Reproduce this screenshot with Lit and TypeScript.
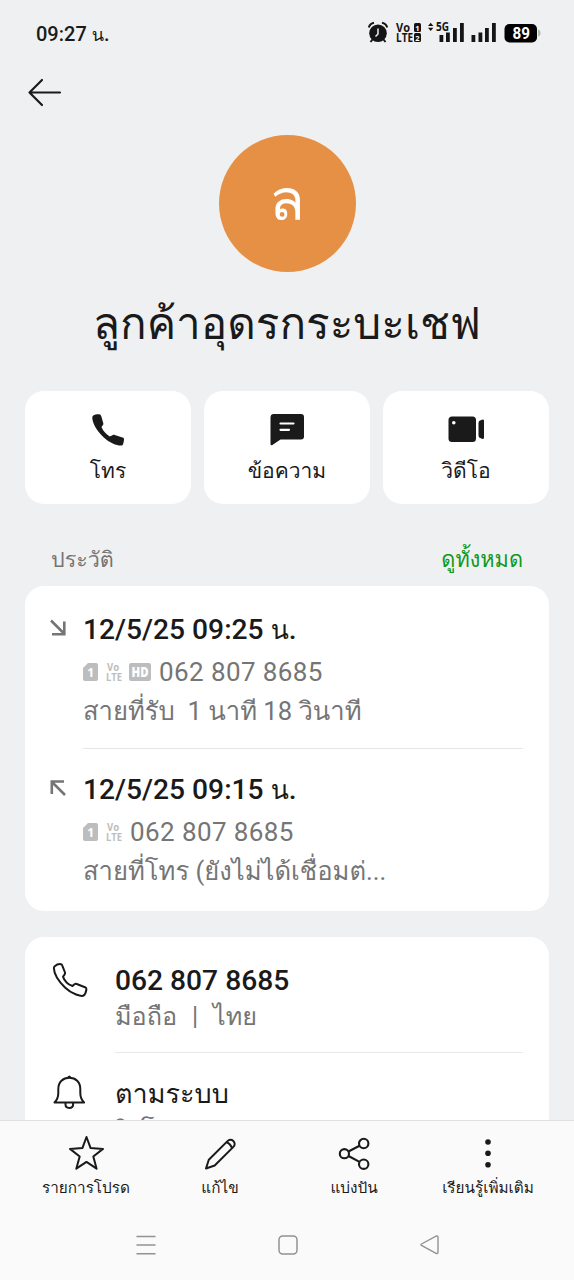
import { LitElement, html, svg, css } from "lit";
import { customElement, property } from "lit/decorators.js";

const icons: Record<string, unknown> = {
  back: svg`<path d="M60 92.5H29.5M42 80L29.5 92.5L42 105" transform="translate(-28 -77)" fill="none" stroke="#1a1a1a" stroke-width="2.2" stroke-linecap="round" stroke-linejoin="round"/>`,
  call: svg`<path d="M1.2 1.6C2.6.6 6 .1 7.8.4C8.800.6 9 1.300 9.300 2.300L11.300 9.200C11.500 10.200 11.300 10.700 10.600 11.500L9.500 13C11 17 14.600 20.500 17.800 22.500L20.400 21.200C21.200 20.700 21.800 20.600 22.700 20.900L30.500 23.400C31.700 23.800 32.100 24.400 32 25.500C31.700 28.500 31.400 30.800 30 31.400C27.400 32.500 18 29.500 11.800 23.500C5 17 .6 9.500.3 4.200C.3 2.700.6 2.100 1.200 1.600Z" fill="#1a1a1a"/>`,
  message: svg`<path d="M3 0H31A3 3 0 0 1 34 3V22.500A3 3 0 0 1 31 25.500H10.500L2 31.200Q.5 31.500.5 30V3A3 3 0 0 1 3 0Z" fill="#1a1a1a"/><path d="M10.500 9.500H23.500M10.500 15.800H19" stroke="#fff" stroke-width="2.200" stroke-linecap="round"/>`,
  video: svg`<rect x=".5" y=".5" width="27.500" height="25.500" rx="3.500" fill="#1a1a1a"/><circle cx="5.800" cy="6.700" r="1.800" fill="#fff"/><path d="M30.500 7.500Q30.500 5.500 31.500 4.700L34 3.700Q36 3 36 5V21.500Q36 23.500 34 22.800L31.500 21.800Q30.500 21 30.500 19Z" fill="#1a1a1a"/>`,
  incoming: svg`<path d="M1 .5L14 13.500M14.300 1.500V14.200H2" fill="none" stroke="#757575" stroke-width="2.600"/>`,
  outgoing: svg`<path d="M15 15L2 2M1.800 14V1.500H14" fill="none" stroke="#757575" stroke-width="2.600"/>`,
  phone: svg`<path d="M1.700 3.200C3.500 1.700 6.200.9 8 1.200C8.900 1.500 9.200 2 9.400 2.800L12 9.500C12.300 10.400 12 11 11.400 11.800L10 13.600C11.500 18 15.500 21.700 19.500 23L21.500 21.300C22.200 20.800 22.900 20.700 23.700 21L32 24.200C33.200 24.700 33.600 25.300 33.400 26.500C33 29 32 31.500 30.800 32.400C28.800 34 18.500 31 12 24.500C5 17.500 1 10 .9 5.200C.9 4.200 1 3.800 1.700 3.200Z" fill="none" stroke="#1a1a1a" stroke-width="2" stroke-linejoin="round"/>`,
  bell: svg`<path d="M1.500 27.500C4.500 24.500 5.300 22 5.300 18V14C5.300 7 10 2.800 16.300 2.800S27.300 7 27.300 14V18C27.300 22 28.100 24.500 31.100 27.500Z" fill="none" stroke="#1a1a1a" stroke-width="2" stroke-linejoin="round"/><path d="M14.300 3Q14.500.5 16.300.5T18.300 3Z" fill="#1a1a1a"/><path d="M12.500 28V29.500C12.500 31.600 14 32.900 16.300 32.900S20.100 31.600 20.100 29.500V28" fill="none" stroke="#1a1a1a" stroke-width="2"/>`,
  star: svg`<path d="M17.500 1L21.600 12.100L34 12.900L24.300 20.500L27.600 32.700L17.500 25.900L7.300 32.700L10.700 20.500L1 12.900L13.400 12.100Z" fill="none" stroke="#1a1a1a" stroke-width="2" stroke-linejoin="round"/>`,
  edit: svg`<path d="M1 30.500L3.800 21.800L22.500 3.100C24 1.600 26.500 1.300 28.300 3C30.200 4.800 30 7.300 28.400 8.900L9.700 27.500Z M21.500 4.200Q25.500 5.500 27 10.200" fill="none" stroke="#1a1a1a" stroke-width="2" stroke-linejoin="round"/>`,
  share: svg`<g fill="none" stroke="#1a1a1a" stroke-width="2.100"><circle cx="5.400" cy="15.700" r="4.600"/><circle cx="24.700" cy="5.500" r="4.700"/><circle cx="24.700" cy="26.200" r="4.700"/><path d="M9.500 13.500L20.500 7.800M9.500 18L20.500 23.900"/></g>`,
  more: svg`<circle cx="3" cy="3" r="2.800" fill="#1a1a1a"/><circle cx="3" cy="14.300" r="2.800" fill="#1a1a1a"/><circle cx="3" cy="25.700" r="2.800" fill="#1a1a1a"/>`,
  recents: svg`<path d="M.5 1.500H19.500M.5 10H19.500M.5 18.800H19.500" stroke="#929292" stroke-width="1.500"/>`,
  home: svg`<rect x="1" y="1" width="18" height="18" rx="3.800" fill="none" stroke="#929292" stroke-width="1.500"/>`,
  navback: svg`<path d="M1.500 9Q.4 9.700 1.500 10.400L16 18.400Q18 19 18 17.200V2.400Q18 .6 16 1.200Z" fill="none" stroke="#929292" stroke-width="1.400"/>`,
  alarm: svg`<circle cx="10" cy="11.300" r="8.800" fill="#151515"/><path d="M.8 5.500Q2 1.500 6 .8M19.200 5.500Q18 1.500 14 .8" stroke="#151515" stroke-width="2" fill="none"/><path d="M4.500 17.500L2.500 20M15.500 17.500L17.500 20" stroke="#151515" stroke-width="2"/><path d="M10 6.500V12L7.500 14.500" stroke="#eff0f2" stroke-width="1.500" fill="none"/>`,
};

@customElement("ui-icon")
class UiIcon extends LitElement {
  @property() name = "";
  @property({ type: Number }) w = 24;
  @property({ type: Number }) h = 24;
  static styles = css`
    :host { display: block; line-height: 0; flex: none; }
    svg { display: block; overflow: visible; }
  `;
  render() {
    return html`<svg width=${this.w} height=${this.h} viewBox="0 0 ${this.w} ${this.h}">${icons[this.name]}</svg>`;
  }
}

@customElement("app-root")
class AppRoot extends LitElement {
  static styles = css`
    :host {
      display: flex; flex-direction: column; width: 574px; height: 1280px; overflow: hidden;
      background: #eff0f2; color: #1a1a1a;
      font-family: Roboto, Loma, "Noto Sans Thai Looped", "Noto Sans", sans-serif; white-space: nowrap;
    }
    * { box-sizing: border-box; }
    svg { overflow: visible; }
    .status { height: 66px; flex: none; display: flex; justify-content: space-between; padding: 22px 34px 0 36px; }
    .clock { font-size: 20px; line-height: 24px; font-weight: 500; }
    .clock span { font-weight: 400; font-size: 18px; }
    .title span { font-weight: 400; font-size: 26.5px; }
    .tray { display: block; }
    .top { height: 69px; flex: none; padding: 11px 0 0 28px; }
    .avatar { width: 137px; height: 137px; border-radius: 50%; background: #e59045; color: #fff; margin: 0 auto;
      flex: none; font-size: 58px; line-height: 130px; text-align: center; }
    .name { height: 119px; flex: none; font-size: 44px; line-height: 60px; padding-top: 22px; text-align: center; }
    .actions { display: grid; grid-template-columns: repeat(3, 1fr); gap: 13px; padding: 0 25px; height: 113px; flex: none; }
    .action { background: #fff; border-radius: 19px; display: flex; flex-direction: column; align-items: center; }
    .pic { height: 63px; display: flex; align-items: center; padding-top: 14px; }
    .action .label { font-size: 21px; line-height: 34px; }
    .head { height: 82px; flex: none; display: flex; justify-content: space-between; padding: 39px 51px 0; font-size: 21.5px; line-height: 33px; color: #757575; }
    .all { color: #0c9a1a; font-size: 21.7px; }
    .card { background: #fff; border-radius: 19px; margin: 0 25px; flex: none; }
    .history { height: 325px; padding: 0 26px 0 24px; }
    .entry { display: flex; height: 162px; padding-top: 26px; }
    .entry + .entry { padding-top: 24px; }
    .mark { width: 34px; padding: 8px 0 0 1px; }
    .body { flex: 1; height: 137px; }
    .entry:first-child .body { border-bottom: 1px solid #e6e6e6; }
    .title { font-size: 28.2px; line-height: 36px; font-weight: 500; }
    .meta { display: flex; align-items: center; height: 48px; font-size: 26px; line-height: 48px; color: #757575; }
    .num { letter-spacing: 0.4px; margin-left: 1px; }
    .badge { margin-right: 7px; flex: none; display: block; }
    .note { font-size: 25.6px; line-height: 36px; color: #757575; margin-top: -3px; white-space: pre; }
    .gap { height: 26px; flex: none; }
    .details { height: 183px; border-radius: 19px 19px 0 0; padding: 0 26px 0 27px; overflow: hidden; }
    .row { display: flex; height: 116px; padding-top: 26px; }
    .row .lead { width: 63px; padding-left: 1px; }
    .row .body { height: 90px; border-bottom: 1px solid #e8e8e8; }
    .row + .row { padding-top: 22px; }
    .row + .row .body { border: 0; padding-top: 1px; }
    .row + .row .title { font-size: 27px; font-weight: 400; }
    .row .note { margin-top: 0; font-size: 25.2px; word-spacing: 1.2px; }
    .row + .row .note { line-height: 38px; }
    .bar { height: 160px; flex: none; background: #fafafa; border-top: 1px solid #dfe0e1; }
    .tabs { display: grid; grid-template-columns: repeat(4, 134px); padding: 0 19px; height: 85px; }
    .tab { display: flex; flex-direction: column; align-items: center; font-size: 15.3px; line-height: 25px; }
    .tab .pic { height: 55px; padding-top: 10px; }
    .nav { display: flex; justify-content: space-between; padding: 29px 135px 0 136px; }
  `;

  private sim() {
    return svg`<path d="M5 0H13Q15 0 15 2V16Q15 18 13 18H2Q0 18 0 16V5Z" fill="#bdbdbd"/><text x="7.600" y="13.500" text-anchor="middle" font-size="12" font-weight="700" fill="#fff">1</text>`;
  }

  private entry(icon: string, time: string, hd: boolean, note: string) {
    return html`<div class="entry"><div class="mark"><ui-icon name=${icon} .w=${16} .h=${16}></ui-icon></div>
<div class="body"><div class="title">${time} <span>น</span>.</div><div class="meta"><svg class="badge" width="16" height="18" font-family="Open Sans">${this.sim()}</svg><svg class="badge" width="16" height="18" font-family="Open Sans" font-weight="700" fill="#bdbdbd"><text x="1" y="8" font-size="10" textLength="12" lengthAdjust="spacingAndGlyphs">Vo</text><text x="0" y="17.500" font-size="10.500" textLength="16" lengthAdjust="spacingAndGlyphs">LTE</text></svg>${hd
      ? html`<svg class="badge" width="22" height="18" font-family="Open Sans"><rect width="22" height="18" rx="2" fill="#bdbdbd"/><text x="2.500" y="14" font-size="14" font-weight="800" fill="#fff" textLength="17" lengthAdjust="spacingAndGlyphs">HD</text></svg>`
      : ""}<span class="num">062 807 8685</span></div><div class="note">${note}</div></div></div>`;
  }

  private action(icon: string, w: number, h: number, label: string, cls = "action") {
    return html`<div class=${cls}><div class="pic"><ui-icon name=${icon} .w=${w} .h=${h}></ui-icon></div><div class="label">${label}</div></div>`;
  }

  render() {
    return html`<div class="status"><div class="clock">09:27 <span>น</span>.</div><svg class="tray" width="172" height="22" font-family="Open Sans" font-weight="700" fill="#151515">
<g>${icons.alarm}</g>
<text x="28" y="9.500" font-size="11.500" textLength="14" lengthAdjust="spacingAndGlyphs">Vo</text><text x="28" y="19.500" font-size="11.500" textLength="17" lengthAdjust="spacingAndGlyphs">LTE</text>
<rect x="46" y="1" width="7" height="9" rx="1.500"/><rect x="46" y="11" width="7" height="9" rx="1.500"/><text x="47.300" y="8.500" font-size="7.500" fill="#fff">1</text><text x="47.300" y="18.500" font-size="7.500" fill="#fff">2</text>
<path d="M60 4L62.700.8L65.400 4ZM60 5.700L62.700 8.900L65.400 5.700Z"/><text x="68" y="9" font-size="11.500" font-weight="700" textLength="13" lengthAdjust="spacingAndGlyphs">5G</text>
<path d="M71.500 13h3.800v7h-3.800ZM78 10.500h3.800v9.500h-3.800ZM85 6h3.800v14h-3.800ZM92 1h3.800v19h-3.800ZM103.500 13h3.800v7h-3.800ZM110.500 10.500h3.800v9.500h-3.800ZM117 6h3.800v14h-3.800ZM124 1h3.800v19h-3.800Z"/>
<rect x="136.500" y="2" width="32.500" height="18.500" rx="5" fill="#000"/><path d="M170 7.500Q172.500 8 172.500 11T170 14.500Z" fill="#b5b6b8"/><text x="144.500" y="17" font-family="Roboto" font-size="16" fill="#fff" textLength="17.500" lengthAdjust="spacingAndGlyphs">89</text></svg></div>
<div class="top"><ui-icon name="back" .w=${34} .h=${30}></ui-icon></div>
<div class="avatar">ล</div><div class="name">ลูกค้าอุดรกระบะเชฟ</div>
<div class="actions">${this.action("call", 32, 32, "โทร")}${this.action("message", 34, 31, "ข้อความ")}${this.action("video", 37, 27, "วิดีโอ")}</div>
<div class="head"><span>ประวัติ</span><span class="all">ดูทั้งหมด</span></div>
<div class="card history">${this.entry("incoming", "12/5/25 09:25", true, "สายที่รับ  1 นาที 18 วินาที")}${this.entry("outgoing", "12/5/25 09:15", false, "สายที่โทร (ยังไม่ได้เชื่อมต่...")}</div>
<div class="gap"></div>
<div class="card details"><div class="row"><div class="lead"><ui-icon name="phone" .w=${34} .h=${34}></ui-icon></div><div class="body"><div class="title">062 807 8685</div><div class="note">มือถือ  |  ไทย</div></div></div><div class="row"><div class="lead"><ui-icon name="bell" .w=${33} .h=${34}></ui-icon></div><div class="body"><div class="title">ตามระบบ</div><div class="note">ริงโทน</div></div></div></div>
<div class="bar"><div class="tabs">${this.action("star", 35, 35, "รายการโปรด", "tab")}${this.action("edit", 31, 32, "แก้ไข", "tab")}${this.action("share", 31, 32, "แบ่งปัน", "tab")}${this.action("more", 6, 29, "เรียนรู้เพิ่มเติม", "tab")}</div>
<div class="nav"><ui-icon name="recents" .w=${20} .h=${20}></ui-icon><ui-icon name="home" .w=${20} .h=${20}></ui-icon><ui-icon name="navback" .w=${19} .h=${20}></ui-icon></div></div>`;
  }
}
